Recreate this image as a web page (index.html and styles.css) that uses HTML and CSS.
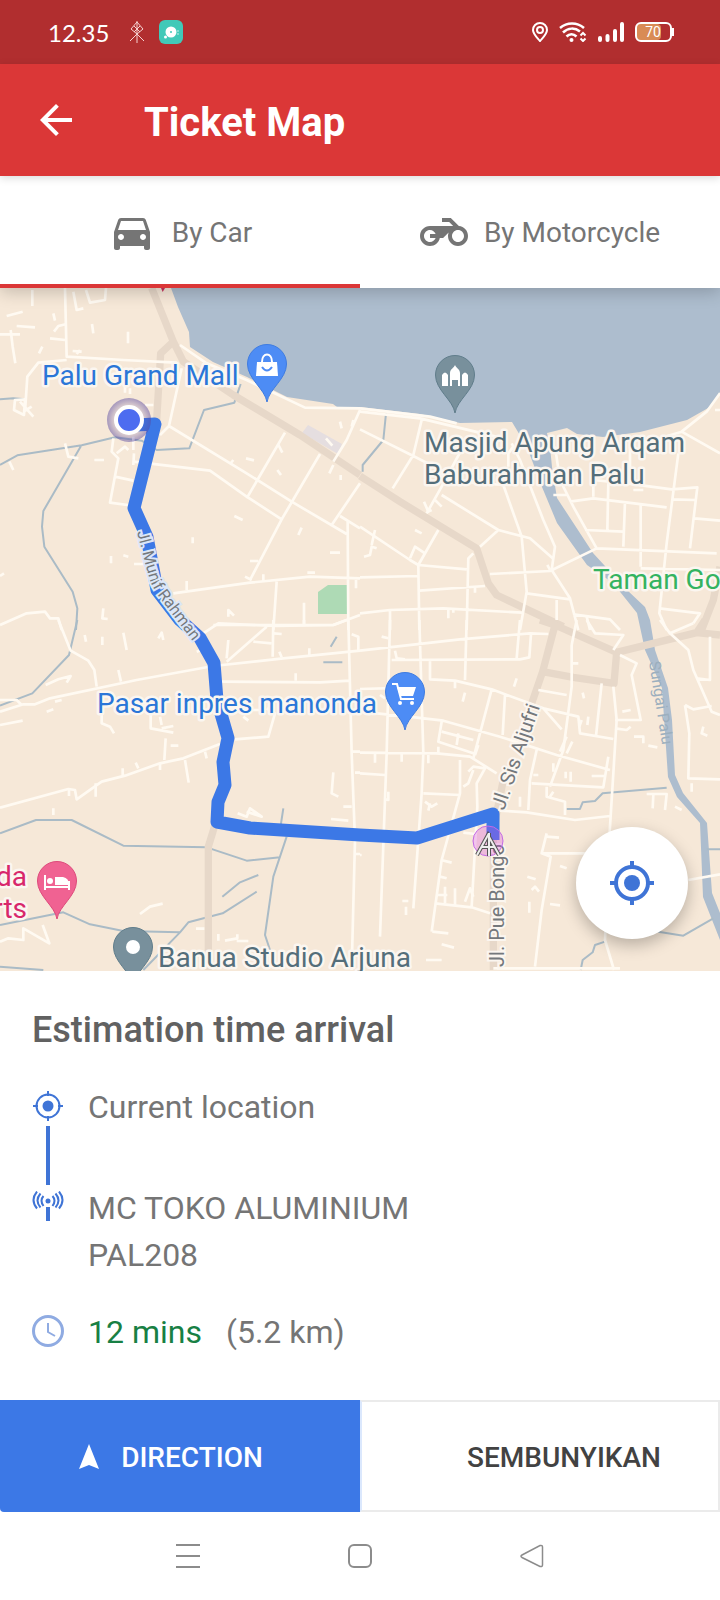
FILE: index.html
```html
<!DOCTYPE html>
<html lang="id">
<head>
  <meta charset="UTF-8" />
  <meta name="viewport" content="width=device-width, initial-scale=1.0" />
  <title>Ticket Map</title>
  <link rel="stylesheet" href="styles.css">
</head>
<body>
  <div class="status-bar">
    <span class="clock">12.35</span>
    <svg class="tower-icon" width="16" height="24" viewBox="0 0 16 24" fill="none" stroke="#f6d2d2" stroke-width="1">
      <path d="M8 1v22M8 2L2 9l6 5 6-5zM5 6l6 6M11 6l-6 6M1 21l7-7 7 7"/>
    </svg>
    <svg width="24" height="24" viewBox="0 0 24 24">
      <rect width="24" height="24" rx="6" fill="#41c9b8"/>
      <circle cx="12" cy="12" r="5.500" fill="#fff"/>
      <circle cx="6.500" cy="17" r="1.500" fill="#fff"/>
      <circle cx="12" cy="12" r="1" fill="#41c9b8"/>
      <path d="M19 10v5" stroke="#fff" stroke-dasharray="2 1" opacity=".7"/>
    </svg>
    <div class="status-icons">
      <svg width="16" height="20" viewBox="0 0 16 20" fill="none" stroke="#fff" stroke-width="2">
        <path d="M8 19C5 15.500 1 12 1 8a7 7 0 0 1 14 0c0 4-4 7.500-7 11z"/>
        <circle cx="8" cy="8" r="3"/>
      </svg>
      <svg width="28" height="20" viewBox="0 0 28 20" fill="none" stroke="#fff" stroke-width="2.500">
        <path d="M1 6c7-6 17-6 24 0M4 10.500c5-5 12-5 17-1M7.500 14.500c3-3 7-3 10 0"/>
        <circle cx="12.500" cy="18" r="2" fill="#fff" stroke="none"/>
        <path d="M21.500 13.500l2.500-2.500 2.500 2.500M21.500 16.500L24 19l2.500-2.500" stroke-width="2"/>
      </svg>
      <svg width="26" height="20" viewBox="0 0 26 20" stroke="#fff" stroke-width="4" stroke-linecap="round">
        <path d="M2 16v2M9.500 14v4M17 9v9M24 2v16"/>
      </svg>
      <svg width="40" height="20" viewBox="0 0 40 20">
        <rect x="1" y="2" width="25" height="16" rx="4" fill="#d98b55"/>
        <rect x="1" y="1" width="35" height="18" rx="5" fill="none" stroke="#fff" stroke-width="2"/>
        <path d="M38 6v8" stroke="#fff" stroke-width="2"/>
        <text class="battery-text" x="18" y="15" text-anchor="middle">70</text>
      </svg>
    </div>
  </div>

  <header class="app-bar">
    <button class="back-btn" aria-label="Back">
      <svg width="48" height="48" viewBox="0 0 24 24" fill="#fff"><path d="M20 11H7.830l5.590-5.590L12 4l-8 8 8 8 1.410-1.410L7.830 13H20v-2z"/></svg>
    </button>
    <h1>Ticket Map</h1>
  </header>

  <nav class="tabs">
    <button class="tab active">
      <svg width="48" height="48" viewBox="0 0 24 24" fill="#757575"><path d="M18.920 6.010C18.720 5.420 18.160 5 17.500 5h-11c-.66 0-1.210.42-1.420 1.010L3 12v8c0 .55.45 1 1 1h1c.55 0 1-.45 1-1v-1h12v1c0 .55.45 1 1 1h1c.55 0 1-.45 1-1v-8l-2.080-5.990zM6.500 16c-.83 0-1.500-.67-1.500-1.500S5.670 13 6.500 13s1.500.67 1.500 1.500S7.330 16 6.500 16zm11 0c-.83 0-1.500-.67-1.500-1.500s.67-1.500 1.500-1.500 1.500.67 1.500 1.500-.67 1.500-1.500 1.500zM5 11l1.500-4.500h11L19 11H5z"/></svg>
      By Car
    </button>
    <button class="tab">
      <svg width="48" height="48" viewBox="0 0 24 24" fill="#757575"><path d="M19.440 9.030L15.410 5H11v2h3.590l2 2H5c-2.800 0-5 2.200-5 5s2.200 5 5 5c2.460 0 4.450-1.690 4.900-4h1.650l2.770-2.770c-.21.54-.32 1.140-.32 1.770 0 2.800 2.200 5 5 5s5-2.200 5-5c0-2.650-1.970-4.770-4.560-4.970zM7.820 15C7.400 16.150 6.280 17 5 17c-1.630 0-3-1.370-3-3s1.370-3 3-3c1.280 0 2.400.85 2.820 2H5v2h2.820zM19 17c-1.660 0-3-1.340-3-3s1.340-3 3-3 3 1.340 3 3-1.340 3-3 3z"/></svg>
      By Motorcycle
    </button>
  </nav>

  <main class="map">
    <svg class="map-canvas" viewBox="0 0 720 683" preserveAspectRatio="xMidYMid slice">
      <defs>
        <path id="pin" d="M0 38C-2 25-19.500 15-19.500 0A19.500 19.500 0 0 1 19.500 0C19.500 15 2 25 0 38z"/>
        <path id="munifRoad" d="M137 244L145 275L151 295Q154 302 160 310L204 368"/>
        <radialGradient id="halo">
          <stop offset=".6" stop-color="#5546a0" stop-opacity=".1"/>
          <stop offset="1" stop-color="#5546a0" stop-opacity=".5"/>
        </radialGradient>
      </defs>

      <!-- bay and river -->
      <path class="water" d="M171 0L178 19L189 44L190 59L213 74L247 89L287 109L333 116L337 119L360 119L420 126L460 135L512 134L527 159L542 199L557 235L587 277L613 295L637 325L645 362L662 400L668 489L677 509L700 535L703 609L720 652V625L712 605L707 535L683 505L675 487L672 432L668 400L655 362L650 332L645 319L627 302L593 265L557 210L552 179L550 159L547 145L567 140L577 146L603 149L640 144L687 132L710 119L720 104V0z"/>
      <path d="M308 137L342 156L338 166L302 145z" fill="#e5dee0"/>
      <path d="M318 304L328 297H347V326H318z" fill="#aedab5"/>

      <!-- road tiles, drawn at 3 units per pixel -->
      <g transform="scale(.33333) translate(0 -24)">
        <path class="stream" d="M0 358L40 355L75 358M0 555L52 526L245 496L345 472L425 482L470 510L568 505L612 390L703 368L722 312M243 498L130 693L126 740L133 800L218 935L232 985L228 1050"/>
        <path class="major" d="M455 24L520 185L550 245L700 345L900 465L1080 585M520 185L482 220L470 420"/>
        <path class="minor" d="M195 24L200 230L370 240L530 248M75 395L82 290L115 248L200 240M540 195L620 250L740 300L915 383L1080 385M545 265L507 438L740 580L875 665L1040 762M507 438L480 465M400 545L630 572L740 650L845 718M855 458L740 655M960 522L845 718L750 900M1080 390L1040 480L1000 545M1080 610L995 735M1020 708L1080 745M1043 722L1045 1050M520 940L750 908L930 890L1080 895M830 905L820 1050M640 1035L1000 1035L1080 1005M340 475L335 515L355 535L330 668L405 678M345 590L400 602M0 1035L80 1000L135 995L150 1015L175 1015L185 1050"/>
        <path class="lane" d="M97 30V78M220 35L230 90L250 85M258 30L270 68L315 60L318 24M20 108L68 95M50 138L105 142M0 163H60M32 150L38 200L46 250M160 100L165 122M162 155L175 138L200 132M150 175L195 180M127 200L117 220M218 213L245 215M230 222L240 210M276 132L280 160M384 155V190M45 360L75 358L72 405L42 390zM60 365L100 410M70 395L95 380M375 320V338M390 325V342M435 375H460M195 490L205 530L235 535M283 540H312M28 545L40 570M350 520L375 500L385 510M400 470V510M400 555L402 520M738 535L762 541M700 540L690 552M832 570L843 585M703 708L728 720M905 743L895 765M578 772V790M834 492L847 518M1020 425L1025 445M1060 420L1055 440M978 475L997 497M1000 555L988 580M1022 585V600M990 818H1020M922 878H945M750 843H775M790 883V905M735 890L755 900M333 828V850M370 826L385 830M402 852H430M560 903V930M310 985L307 1015L323 1017M685 1010V990L702 1007M912 968V1035M0 888L12 880M1068 900V925"/>
        <path d="M483 24L488 36L495 24z" fill="#c9335f"/>
      </g>

      <g transform="scale(.33333) translate(1080 -24)">
        <path class="stream" d="M78 400L70 480L8 555V575"/>
        <path class="major" d="M0 588L120 665L350 805L385 910L410 945L610 1040M1080 860L1060 960L1025 1050"/>
        <path class="minor" d="M0 385L210 410L290 430M0 395L180 415L430 475M0 448L160 528L310 605L430 615M185 420L160 525L98 625M0 740L150 840L175 855L320 868M320 480L245 620L200 700M245 645L415 750L510 775L578 835M430 615L485 770L500 935L480 1050M455 490L480 540L550 720L585 800L575 870M445 560V520L460 500M415 750L360 800M235 750L175 855L178 1050M340 820L325 835L320 1050M0 892L175 888M178 932L375 918M0 1000L90 990L250 985L485 998M90 990V1050M390 882L570 873L710 805L1070 820M585 500L600 600L640 680L710 805M575 870L630 955L655 1050M500 940L630 958M590 960V1020M640 1003L750 1018L780 1050M630 665L700 655L920 682M700 650V600L800 610L935 628L1012 622L990 805M745 610L742 750M675 750L790 755M795 665L790 800M842 675V860M955 520L920 790L898 1000L920 1050M935 658L1005 660M1003 715L1080 722M965 455L1080 520M850 490L965 455L1040 395L1080 340M810 500V600M842 865L1080 870M898 985L1020 1000L1000 1030M580 645H620"/>
        <path class="lane" d="M192 665L205 695L215 690M225 660L245 680M45 750L35 795M12 830L30 825L35 800L50 805M165 750L185 760M150 835L165 800L195 820M345 920V938M265 990V1015M280 988V998M562 855L570 870M820 630H850M680 1010L690 1050M1065 390H1080"/>
      </g>

      <g transform="scale(.33333) translate(0 996)">
        <path class="stream" d="M232 0L207 105L97 220L0 257M0 640L108 600H215L370 677L620 682L740 722L840 712M850 565L840 630M860 650L820 770L795 945L810 990M775 765L720 787L667 830M770 815L668 880L565 907L540 937L430 1050M0 915L190 877L270 913L370 933L540 937M0 1040L130 1050M1010 50L992 80M970 127H1027"/>
        <path class="major" d="M645 615L625 680V1050"/>
        <path class="minor" d="M175 0L212 92L265 122L283 150L290 200M0 275L70 253H105L150 235L410 180L640 138L850 115L1080 92M610 40L655 10L830 18L1000 15L1040 0M665 185L960 187L1050 182M1045 0L1055 400L1065 660L1055 1050M680 125L800 20M820 0L818 110M705 358L805 350L825 280L800 265M660 372L550 415L480 430L375 467L305 485L230 538L225 510L205 507L0 563"/>
        <path class="lane" d="M137 195L175 178L212 168L200 188M0 240H50L65 255M0 315L68 302M140 275L160 268M165 245L185 240M254 45L258 65M307 50V75M370 38L380 90M475 55L485 38L490 60M355 150L363 185M590 95L620 85M685 60L680 115M838 95L845 112M760 65L815 70M820 40L845 42M912 0V12M928 85V105M887 160V182M305 265V310L330 320L342 340M452 285V325L520 338M480 290L485 315M485 325L520 318M497 355L493 420M512 377H535M555 420L566 488M615 395L620 415M407 428L415 445M368 445V465M480 430V450M207 510V528M287 490V530M160 565V585M713 580L740 590L750 565L785 590L740 575M1000 457L995 520L1015 530M993 597L1045 602M1030 560H1055M1055 395H1080M1065 458H1080M1055 43L1075 50V90M1065 702H1080M420 882L450 860L488 851M0 965L25 955L70 960V925L148 970L128 915M655 942V962M675 962L712 955V943M710 963H745M588 926H613M730 290L745 302M745 270H785"/>
      </g>

      <g transform="scale(.33333) translate(1080 996)">
        <path class="stream" d="M920 503L728 520L705 543L668 547L660 567H620M895 935L970 947L1060 895M735 965L705 975L698 997L668 1020L662 1050M1040 688H1080"/>
        <path class="major" d="M540 0L585 15L770 97L1010 38L1080 45M585 15L548 155L515 250M770 97L762 190L640 172L548 155M1010 38L1035 0M430 480L410 580L400 650V1050"/>
        <path class="minor" d="M90 0L80 400L60 950M178 0L190 400L185 520L160 865M320 0L315 180M0 92L300 58L510 40L565 42M480 0L470 115M95 120L480 118L508 112L513 42M210 120V178L285 182L395 208L550 265L605 328M0 207L150 203M0 275L145 290L250 302L420 350L590 405L750 450M0 398L230 400L330 410L410 460M245 305L235 365L340 400M395 208L340 415M435 225L428 345M550 265L655 290L660 340L760 357M635 75L650 0M635 75V200L610 390L570 500M725 190L708 348M760 200L770 300L750 620L735 960L762 1050M530 390L510 480L505 570M515 490L730 502L745 410M420 572L500 577L645 600L750 588M300 420L300 520L245 720L215 935M190 520L300 525M325 455L340 440L375 445L350 490L352 560L335 860M225 850L335 862L390 880M0 460L75 465M545 700H680M560 640L545 700L572 710L545 870L525 1040M780 105L830 130L815 165L842 300L765 300M930 40L985 90L1000 150L1055 275L1080 285M900 0L930 40L1000 10M1050 50V180L1010 175M975 255L1000 268L1055 258M975 255L988 340L985 475L1080 478M680 0L705 40L790 45L760 90M985 780L1080 763M400 1045H780M560 500V530L615 545V585"/>
        <path class="lane" d="M105 92L110 115L135 118M65 50L85 55M60 225L75 235M470 175L462 200M315 218L308 245M285 182V205M45 400V428M125 402V425M205 405V430M85 515V540L75 538M195 545L215 560L232 550M205 572L210 550M245 335L340 360M295 340L290 375M355 375L345 405M235 380V400M340 450L325 490L310 500M480 530V560M620 350L600 395M637 365L620 400M668 218L672 235M665 300L658 320M685 290L682 315M787 275L812 270M765 325L800 330L812 320M822 350H850V370M865 377L892 382M535 210L620 225M520 465H535M580 430V455M617 455V475M632 455V485M695 468H735M570 530L580 515M860 522H920L915 570M880 525L878 565M995 490V515M945 560L965 570M1030 320L1025 340L1042 347M243 720L275 728M240 770L260 775M255 800V850M285 805V855M230 825H262M315 845L330 805L340 830M127 843H145M138 860V885M217 935L265 940M245 973L282 983M198 1020H245M0 705H5M560 650L597 653M502 770L527 778M515 810L525 800L537 815M570 852L600 856M508 845V878M600 738L620 745M310 638L345 642M635 130H655"/>
      </g>

      <text class="river-label" transform="translate(649 374) rotate(81)">Sungai Palu</text>

      <!-- route -->
      <path d="M136 137L155 136L134 220L147 249L157 302L180 332L200 350L214 375L217 412L228 450L223 474L225 497L218 514L217 534L250 540L360 547L417 550L493 526L493 552" class="route"/>
      <circle cx="129" cy="132" r="22" fill="url(#halo)"/>
      <circle cx="129" cy="132" r="13" fill="#4d6cf0" stroke="#fff" stroke-width="4"/>

      <text class="road-label munif"><textPath href="#munifRoad">Jl. Munif Rahman</textPath></text>
      <text class="road-label" transform="translate(504 523) rotate(-71)">Jl. Sis Aljufri</text>
      <text class="road-label" transform="translate(504 679) rotate(-90)">Jl. Pue Bongo</text>

      <!-- destination tower -->
      <circle cx="488" cy="553" r="15" fill="#d74be0" fill-opacity=".3" stroke="#c36be6"/>
      <path d="M477 567L488 547L499 567M489 545V568M482 559H495" fill="none" stroke="#555" stroke-width="4"/>
      <path d="M477 567L488 547L499 567M489 545V568M482 559H495" fill="none" stroke="#eee" stroke-width="2"/>

      <!-- places -->
      <g transform="translate(267 76)">
        <use href="#pin" fill="#4d8cf5" stroke="#3f7ce0"/>
        <path d="M-10-2H10L11 12H-11z" fill="#fff"/>
        <path d="M-5-2C-5-12 5-12 5-2" fill="none" stroke="#fff" stroke-width="2"/>
        <path d="M-5 3Q0 10 5 3" fill="none" stroke="#4d8cf5" stroke-width="2"/>
      </g>
      <text class="place blue" x="42" y="97">Palu Grand Mall</text>

      <g transform="translate(455 87)">
        <use href="#pin" fill="#78909c" stroke="#607d8b"/>
        <path d="M-13 11V0Q-10-5-7 0V11zM7 11V0Q10-5 13 0V11zM-5 11V-2C-5-6-1-7 0-10C1-7 5-6 5-2V11H3V5H-3V11z" fill="#fff"/>
      </g>
      <text class="place slate" x="424" y="164">Masjid Apung Arqam</text>
      <text class="place slate" x="424" y="196">Baburahman Palu</text>

      <text class="place green" x="593" y="301">Taman Go</text>

      <g transform="translate(405 404)">
        <use href="#pin" fill="#4d8cf5" stroke="#3f7ce0"/>
        <path d="M-13-8H-8L-4 7H9" fill="none" stroke="#fff" stroke-width="2"/>
        <path d="M-8-5H11L8 4H-5z" fill="#fff"/>
        <circle cx="-5" cy="11" r="2" fill="#fff"/>
        <circle cx="7" cy="11" r="2" fill="#fff"/>
      </g>
      <text class="place blue" x="97" y="425">Pasar inpres manonda</text>

      <g transform="translate(57 593)">
        <use href="#pin" fill="#f06292" stroke="#dd4a7b"/>
        <path d="M-12-6V9M12 0V9M-12 6H12" fill="none" stroke="#fff" stroke-width="2"/>
        <circle cx="-7" cy="0" r="3" fill="#fff"/>
        <path d="M-2 4V-4H6Q12-3 12 4z" fill="#fff"/>
      </g>
      <text class="place pink" x="27" y="598" text-anchor="end">da</text>
      <text class="place pink" x="27" y="630" text-anchor="end">rts</text>

      <g transform="translate(133 659)">
        <use href="#pin" fill="#78909c" stroke="#607d8b"/>
        <circle r="7" fill="#fff"/>
      </g>
      <text class="place slate" x="158" y="679">Banua Studio Arjuna</text>
    </svg>

    <button class="locate-btn" aria-label="My location">
      <svg width="44" height="44" viewBox="0 0 44 44" fill="none" stroke="#3f74d6" stroke-width="4">
        <circle cx="22" cy="22" r="16"/>
        <circle cx="22" cy="22" r="8" fill="#3f74d6" stroke="none"/>
        <path d="M22 0v6M22 38v6M0 22h6M38 22h6"/>
      </svg>
    </button>
  </main>

  <section class="sheet">
    <h2>Estimation time arrival</h2>
    <ul class="stops">
      <li class="stop">
        <div class="marker">
          <svg width="32" height="32" viewBox="0 0 32 32" fill="none" stroke="#3f74d6" stroke-width="2">
            <circle cx="16" cy="16" r="11.500"/>
            <circle cx="16" cy="16" r="5.500" fill="#3f74d6" stroke="none"/>
            <path d="M16 1v5M16 26v5M1 16h5M26 16h5"/>
          </svg>
          <span class="stop-line"></span>
        </div>
        <p>Current location</p>
      </li>
      <li class="stop">
        <div class="marker">
          <svg width="32" height="32" viewBox="0 0 32 32" fill="none" stroke="#3f74d6" stroke-width="2">
            <path d="M16 16v14" stroke-width="4"/>
            <circle cx="16" cy="10" r="2.500" fill="#3f74d6" stroke="none"/>
            <path d="M11.500 5q-4 4.500 0 10M8.500 2.500q-6 7 0 14M5 .5q-7 8.500 0 17M20.500 5q4 4.500 0 10M23.500 2.500q6 7 0 14M27 .5q7 8.500 0 17"/>
          </svg>
        </div>
        <p>MC TOKO ALUMINIUM<br>PAL208</p>
      </li>
      <li class="stop summary">
        <div class="marker">
          <svg width="32" height="32" viewBox="0 0 32 32" fill="none" stroke="#8fabe2" stroke-width="2">
            <circle cx="16" cy="16" r="14.500" stroke-width="3"/>
            <path d="M16 8v9l7 4"/>
          </svg>
        </div>
        <p><span class="duration">12 mins</span><span>(5.2 km)</span></p>
      </li>
    </ul>
  </section>

  <div class="actions">
    <button class="btn btn-primary">
      <svg width="48" height="48" viewBox="0 0 48 48" fill="#fff"><path d="M24 11L34 36L24 32L14 36z"/></svg>
      DIRECTION
    </button>
    <button class="btn btn-plain">SEMBUNYIKAN</button>
  </div>

  <div class="system-nav">
    <button aria-label="Recent apps">
      <svg width="24" height="24" viewBox="0 0 24 24" stroke="#8c8c8c" stroke-width="2"><path d="M0 1h24M0 12h24M0 23h24"/></svg>
    </button>
    <button aria-label="Home">
      <svg width="24" height="24" viewBox="0 0 24 24" fill="none" stroke="#8c8c8c" stroke-width="2"><rect x="1" y="1" width="22" height="22" rx="5"/></svg>
    </button>
    <button aria-label="Back">
      <svg width="24" height="24" viewBox="0 0 24 24" fill="none" stroke="#8c8c8c" stroke-width="1.500"><path d="M2 11L20 1.500Q22.500 1 22.500 3V21Q22.500 23 20 22.500L2 13.500Q0 12 2 11z"/></svg>
    </button>
  </div>
</body>
</html>
```
FILE: styles.css
```css
:root {
  --primary: #db3737;
  --primary-dark: #b12e2f;
  --blue: #3c78e6;
  --icon-blue: #3f74d6;
  --text: #757575;
  --land: #f6e8d8;
}

* { margin: 0; padding: 0; box-sizing: border-box; }

body {
  font-family: Roboto, "Liberation Sans", sans-serif;
  background: #fff;
  color: var(--text);
  min-height: 100vh;
  display: flex;
  flex-direction: column;
}

button {
  font-family: inherit;
  border: none;
  background: none;
  cursor: pointer;
}

svg { display: block; }

/* Status bar */
.status-bar {
  height: 64px;
  padding: 0 45px 0 48px;
  background: var(--primary-dark);
  color: #fff;
  display: flex;
  align-items: center;
}
.clock {
  font-family: Lato, sans-serif;
  font-size: 24px;
}
.tower-icon { margin: 0 14px 0 20px; }
.status-icons {
  margin-left: auto;
  display: flex;
  align-items: center;
  gap: 11px;
}
.battery-text {
  font-size: 14px;
  fill: #fff;
}

/* App bar */
.app-bar {
  height: 112px;
  padding: 0 32px;
  background: var(--primary);
  color: #fff;
  display: flex;
  align-items: center;
  gap: 64px;
  position: relative;
  z-index: 3;
  box-shadow: 0 2px 8px rgba(0,0,0,0.15);
}
.app-bar h1 {
  font-size: 40px;
  font-weight: 700;
  padding-top: 4px;
}

/* Tabs */
.tabs {
  height: 112px;
  display: grid;
  grid-template-columns: 1fr 1fr;
  background: #fff;
  position: relative;
  z-index: 2;
  box-shadow: 0 4px 16px rgba(0,0,0,0.2);
}
.tab {
  display: flex;
  align-items: center;
  justify-content: center;
  gap: 16px;
  font-size: 28px;
  color: var(--text);
  border-top: 4px solid transparent;
  border-bottom: 4px solid transparent;
}
.tab.active { border-bottom-color: var(--primary); }

/* Map */
.map {
  flex: 1;
  min-height: 480px;
  position: relative;
  overflow: hidden;
  background: var(--land);
}
.map-canvas {
  position: absolute;
  width: 100%;
  height: 100%;
}
.water { fill: #adbdce; }
.stream, .major, .minor, .lane {
  fill: none;
  stroke-linejoin: round;
}
.stream { stroke: #aabbc6; stroke-width: 6; }
.major { stroke: #e7d8c9; stroke-width: 22; }
.minor { stroke: #fffaf2; stroke-width: 8; }
.lane { stroke: #fffaf2; stroke-width: 8; }
.route {
  fill: none;
  stroke: var(--blue);
  stroke-width: 13;
  stroke-linejoin: round;
}
.place {
  font-size: 28px;
  stroke: #fbf6f0;
  stroke-width: 5;
  stroke-linejoin: round;
  paint-order: stroke;
}
.blue { fill: #2a76d8; }
.slate { fill: #546e7a; }
.green { fill: #34b360; }
.pink { fill: #d8276b; }
.road-label {
  font-size: 20px;
  fill: #74787c;
  stroke: #fbf6f0;
  stroke-width: 4;
  paint-order: stroke;
}
.munif {
  font-size: 16px;
  stroke: #dbe6f7;
}
.river-label {
  font-size: 16px;
  fill: #9cafbe;
}
.locate-btn {
  position: absolute;
  right: 32px;
  bottom: 32px;
  width: 112px;
  height: 112px;
  border-radius: 50%;
  background: #fff;
  display: flex;
  align-items: center;
  justify-content: center;
  box-shadow: 0 6px 16px rgba(0,0,0,0.25);
}

/* Bottom sheet */
.sheet {
  padding: 35px 32px 44px;
  background: #fff;
  border-radius: 4px 4px 0 0;
}
.sheet h2 {
  font-size: 36px;
  font-weight: 500;
  line-height: 48px;
  color: #616161;
  margin-bottom: 30px;
}
.stops { list-style: none; }
.stop {
  display: flex;
  gap: 24px;
  font-size: 32px;
  line-height: 47px;
}
.stop:first-child { min-height: 101px; }
.marker {
  padding-top: 6px;
  display: flex;
  flex-direction: column;
  align-items: center;
  gap: 4px;
}
.stop-line {
  flex: 1;
  width: 4px;
  background: var(--icon-blue);
}
.summary { margin-top: 30px; }
.summary p { display: flex; gap: 24px; }
.duration { color: #188044; }

/* Actions */
.actions {
  height: 112px;
  display: grid;
  grid-template-columns: 1fr 1fr;
}
.btn {
  display: flex;
  align-items: center;
  justify-content: center;
  gap: 8px;
  font-size: 28px;
  font-weight: 500;
  padding-top: 2px;
}
.btn-primary {
  background: var(--blue);
  color: #fff;
  padding-right: 32px;
  border-bottom-left-radius: 4px;
}
.btn-plain {
  color: #424242;
  padding-left: 48px;
  border: 2px solid #ebebeb;
  border-left-color: #dbe8fd;
}

/* System navigation */
.system-nav {
  height: 88px;
  display: flex;
  align-items: center;
  justify-content: center;
  gap: 148px;
}
```
